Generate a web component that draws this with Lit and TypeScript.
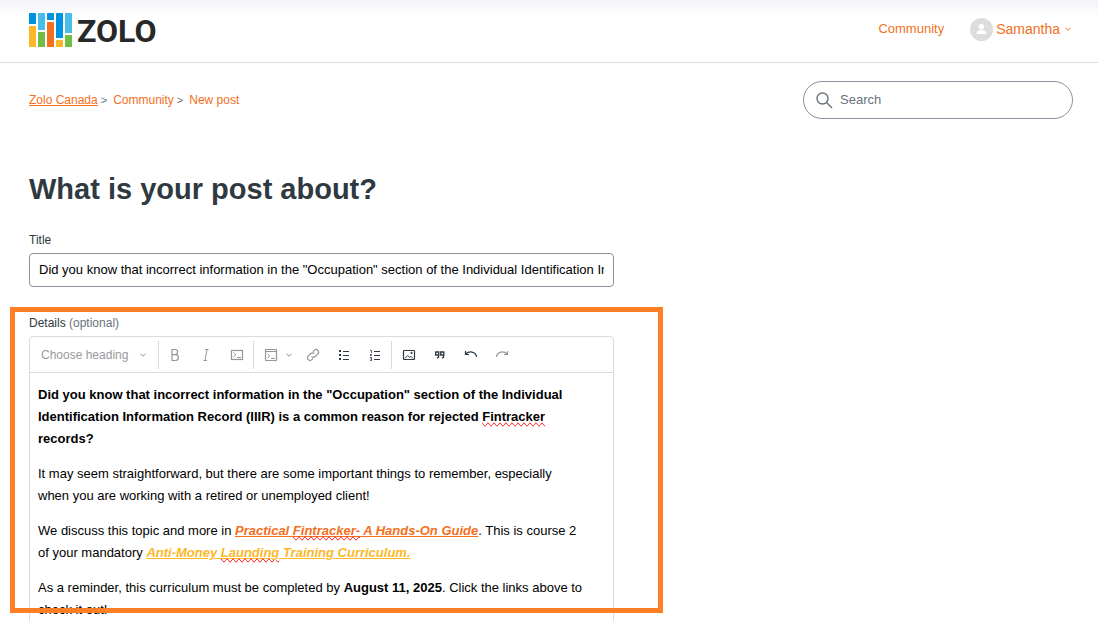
import { LitElement, html, css, svg } from "lit";
import { customElement, property } from "lit/decorators.js";

const chevron = html`<svg class="chev" viewBox="0 0 12 12" aria-hidden="true">
  <path d="M3 4.5 6 7.5 9 4.5" fill="none" stroke="currentColor" stroke-width="1.2" />
</svg>`;

const glyphs = {
  bold: svg`<path d="M5 2.5h3a2.6 2.6 0 0 1 0 5.2H5zM5 7.7h3.500a2.900 2.900 0 0 1 0 5.800H5z" stroke-width="1.2" />`,
  italic: svg`<path d="M7 2.5h3.500M5.500 13.500H9M9 2.5l-2 11" />`,
  code: svg`<rect x="2.5" y="3.5" width="11" height="9" stroke-width="1.2" /><path d="M4.5 5.5 6.8 7.8 4.5 10M8 10.5h4" />`,
  codeBlock: svg`<rect x="2.5" y="2.5" width="11" height="11" rx=".5" stroke-width="1.2" /><path d="M2.5 4.5h11M4.5 6.8 6.8 9 4.5 11.3M8 11.5h4" />`,
  link: svg`<path d="M6.6 9.4a2.5 2.5 0 0 0 3.6.1l2.6-2.6a2.5 2.5 0 0 0-3.6-3.6L7.8 4.7M9.4 6.6a2.5 2.5 0 0 0-3.6-.1L3.2 9.1a2.5 2.5 0 0 0 3.6 3.6l1.4-1.4" stroke-width="1.2" />`,
  bullets: svg`<path d="M3 4h2M3 8h2M3 12h2" stroke-width="2" /><path d="M7 4.5h6M7 8.5h6M7 12.5h6" />`,
  numbers: svg`<path d="M3 3.5h1.500V6M3 7.5h1.500v1.200H3M3 10.5h1.500v3H3M3.500 12h1" stroke-width=".8" /><path d="M7 4.5h6M7 8.5h6M7 12.5h6" />`,
  image: svg`<rect x="2.5" y="3.5" width="11" height="9" rx=".5" stroke-width="1.2" /><path d="M4 11.5l2.600-3 2 1.800 1.400-1 2 2.200" /><circle cx="10.5" cy="6" r=".7" fill="currentColor" />`,
  quote: svg`<path d="M6.8 8H3.700V5h3.100v3.800c0 1.300-.6 2-1.800 2.400M11.800 8H8.700V5h3.100v3.800c0 1.300-.6 2-1.800 2.400" stroke-width="1.3" />`,
  undo: svg`<path d="M2.5 4v3.500H6M2.800 7C6 3.800 12.500 4 13.700 10" stroke-width="1.2" />`,
  redo: svg`<path d="M13.500 4v3.500H10M13.200 7C10 3.800 3.500 4 2.300 10" stroke-width="1.2" />`,
};

@customElement("site-header")
export class SiteHeader extends LitElement {
  static styles = css`
    :host { display: block; }
    .bar {
      display: flex; align-items: center; justify-content: space-between;
      height: 62px; padding: 0 25px 0 29px;
      border-bottom: 1px solid #d8dcde;
      background: linear-gradient(#f2f3f7, #fff 16px);
    }
    .logo { display: block; height: 36px; }
    .logo svg { display: block; width: 132px; height: 36px; overflow: visible; }
    .word { font: 700 32px Roboto, sans-serif; fill: #282828; }
    .nav { display: flex; align-items: center; gap: 26px; font-size: 13px; padding-bottom: 4px; }
    .nav a { color: #f36f21; text-decoration: none; }
    .user {
      display: flex; align-items: center; gap: 3px; padding: 0;
      border: 0; background: none; color: #f36f21; font: inherit; font-size: 14px;
    }
    .avatar { width: 23px; height: 23px; }
    .chev { width: 10px; height: 10px; }
  `;
  render() {
    const blocks: [number, number, number, string][] = [
      [0, 0, 11, "#0093dd"], [0, 13, 21, "#fdb827"],
      [9, 0, 17, "#49bde5"], [9, 19, 15, "#70bf44"],
      [18, 0, 7, "#0093dd"], [18, 9, 25, "#f36f21"],
      [27, 0, 25, "#0093dd"], [27, 27, 7, "#fdb827"],
      [36, 0, 20, "#49bde5"], [36, 22, 12, "#70bf44"],
    ];
    return html`<header class="bar">
      <a class="logo" href="#" aria-label="Zolo home">
        <svg viewBox="0 0 132 36">
          ${blocks.map(([x, y, h, c]) => svg`<rect x=${x} y=${y} width="7" height=${h} rx=".5" fill=${c} />`)}
          <text class="word" x="48" y="29">ZOLO</text>
        </svg>
      </a>
      <nav class="nav">
        <a href="#">Community</a>
        <button class="user" type="button">
          <svg class="avatar" viewBox="0 0 23 23" aria-hidden="true">
            <circle cx="11.5" cy="11.5" r="11.5" fill="#ddd" />
            <circle cx="11.5" cy="8.7" r="2.7" fill="#fff" />
            <path d="M6.5 16c0-2.500 1.800-4 5-4s5 1.500 5 4z" fill="#fff" />
          </svg>
          <span>Samantha</span>${chevron}
        </button>
      </nav>
    </header>`;
  }
}

@customElement("tool-button")
export class ToolButton extends LitElement {
  @property() icon: keyof typeof glyphs = "bold";
  @property() label = "";
  @property({ type: Boolean }) dim = false;
  @property({ type: Boolean }) menu = false;
  static styles = css`
    :host { display: block; }
    .tool {
      display: flex; align-items: center; justify-content: center; gap: 5px;
      min-width: 31px; height: 28px; padding: 0;
      border: 0; background: none; color: #2f3941;
    }
    .dim { color: #93979b; }
    .menu { width: 43px; padding-left: 5px; }
    .icon { width: 16px; height: 16px; }
    .chev { width: 10px; height: 10px; color: #888; }
  `;
  render() {
    return html`<button type="button" aria-label=${this.label}
      class="tool ${this.dim ? "dim" : ""} ${this.menu ? "menu" : ""}">
      <svg class="icon" viewBox="0 0 16 16" fill="none" stroke="currentColor">${glyphs[this.icon]}</svg>
      ${this.menu ? chevron : null}
    </button>`;
  }
}

@customElement("post-editor")
export class PostEditor extends LitElement {
  static styles = css`
    :host { display: block; }
    .editor { border: 1px solid #d8dcde; border-radius: 4px; }
    .toolbar {
      display: flex; align-items: center; height: 35px;
      border-bottom: 1px solid #d8dcde;
    }
    .heading {
      display: flex; align-items: center; justify-content: space-between;
      width: 128px; height: 28px; padding: 0 10px 0 11px;
      border: 0; background: none; color: #97999c; font: inherit;
    }
    .chev { width: 10px; height: 10px; }
    .group { display: flex; padding-right: 1px; border-left: 1px solid #d8dcde; }
    .insert { padding-left: 1px; }
    .body {
      padding: 11px 28px 11px 8px; min-height: 260px; outline: none;
      color: #000; font-size: 13px; line-height: 22px;
    }
    .body p { margin: 0 0 13px; }
    .guide, .training { font-weight: 700; font-style: italic; text-decoration: underline; }
    .guide { color: #f36f21; }
    .training { color: #fdb827; }
    .typo { text-decoration-line: spelling-error; }
  `;
  render() {
    return html`<div class="editor">
      <div class="toolbar" role="toolbar" aria-label="Formatting">
        <button class="heading" type="button" aria-haspopup="listbox"><span>Choose heading</span>${chevron}</button>
        <div class="group">
          <tool-button icon="bold" label="Bold" dim></tool-button>
          <tool-button icon="italic" label="Italic" dim></tool-button>
          <tool-button icon="code" label="Code" dim></tool-button>
        </div>
        <div class="group">
          <tool-button icon="codeBlock" label="Code block" dim menu></tool-button>
          <tool-button icon="link" label="Link" dim></tool-button>
          <tool-button icon="bullets" label="Bulleted list"></tool-button>
          <tool-button icon="numbers" label="Numbered list"></tool-button>
        </div>
        <div class="group insert">
          <tool-button icon="image" label="Insert image"></tool-button>
          <tool-button icon="quote" label="Block quote"></tool-button>
          <tool-button icon="undo" label="Undo"></tool-button>
          <tool-button icon="redo" label="Redo" dim></tool-button>
        </div>
      </div>
      <div class="body" role="textbox" aria-multiline="true" aria-label="Details" contenteditable="true" spellcheck="false">
        <p><strong>Did you know that incorrect information in the "Occupation" section of the Individual Identification Information Record (IIIR) is a common reason for rejected <span class="typo">Fintracker</span> records?</strong></p>
        <p>It may seem straightforward, but there are some important things to remember, especially when you are working with a retired or unemployed client!</p>
        <p>We discuss this topic and more in <a class="guide" href="#">Practical <span class="typo">Fintracker-</span> A Hands-On Guide</a>. This is course 2 of your mandatory <a class="training" href="#">Anti-Money <span class="typo">Launding</span> Training Curriculum.</a></p>
        <p>As a reminder, this curriculum must be completed by <strong>August 11, 2025</strong>. Click the links above to check it out!</p>
      </div>
    </div>`;
  }
}

@customElement("app-root")
export class AppRoot extends LitElement {
  static styles = css`
    :host {
      display: block; height: 100vh; overflow: hidden; background: #fff;
      color: #2f3941; font: 12px/16px "Liberation Sans", Arial, sans-serif;
    }
    .page { padding: 18px 25px 0 29px; }
    .top { display: flex; align-items: center; justify-content: space-between; }
    .crumbs { display: flex; list-style: none; margin: 0; padding: 0; }
    .crumbs li + li::before { content: ">"; color: #68737d; font-size: 11px; margin: 0 6px 0 3px; }
    .crumbs a { color: #f36f21; text-decoration: none; }
    .crumbs .current { text-decoration: underline; }
    .search {
      display: flex; align-items: center; gap: 7px; box-sizing: border-box;
      width: 270px; height: 38px; padding: 0 12px;
      border: 1px solid #87929d; border-radius: 19px;
    }
    .search svg { width: 17px; height: 17px; flex: none; }
    .search input {
      flex: 1; min-width: 0; border: 0; outline: 0; padding: 0; background: none;
      font: inherit; font-size: 13px; color: #2f3941;
    }
    .search input::placeholder { color: #68737d; opacity: 1; }
    h1 { margin: 52px 0 25px; font-size: 29px; line-height: 36px; }
    .form { width: 56%; }
    .field { position: relative; }
    .field label, .label { display: block; margin-bottom: 5px; }
    .title {
      display: block; box-sizing: border-box; width: 100%; height: 34px;
      padding: 0 9px 1px; border: 1px solid #87929d; border-radius: 4px;
      font: inherit; font-size: 13px; color: #000; outline: none;
    }
    .details { margin-top: 28px; }
    .optional { color: #68737d; }
    .frame {
      position: absolute; top: -8px; left: -19px; right: -49px; height: 296px;
      border: 5px solid #ff7f27; pointer-events: none;
    }
  `;
  render() {
    return html`<site-header></site-header>
      <main class="page">
        <div class="top">
          <ol class="crumbs">
            <li><a class="current" href="#">Zolo Canada</a></li>
            <li><a href="#">Community</a></li>
            <li><a href="#">New post</a></li>
          </ol>
          <form class="search" role="search">
            <svg viewBox="0 0 17 17" fill="none" stroke="#68737d" stroke-width="1.4" aria-hidden="true">
              <circle cx="6.5" cy="6.5" r="5.5" /><path d="M10.500 10.500 16 16" />
            </svg>
            <input type="search" placeholder="Search" aria-label="Search" />
          </form>
        </div>
        <h1>What is your post about?</h1>
        <div class="form">
          <div class="field">
            <label for="title">Title</label>
            <input id="title" class="title" type="text"
              .value=${'Did you know that incorrect information in the "Occupation" section of the Individual Identification Information Record (IIIR) is a common reason for rejected Fintracker records?'} />
          </div>
          <div class="field details">
            <span class="label">Details <span class="optional">(optional)</span></span>
            <post-editor></post-editor>
            <div class="frame"></div>
          </div>
        </div>
      </main>`;
  }
}
